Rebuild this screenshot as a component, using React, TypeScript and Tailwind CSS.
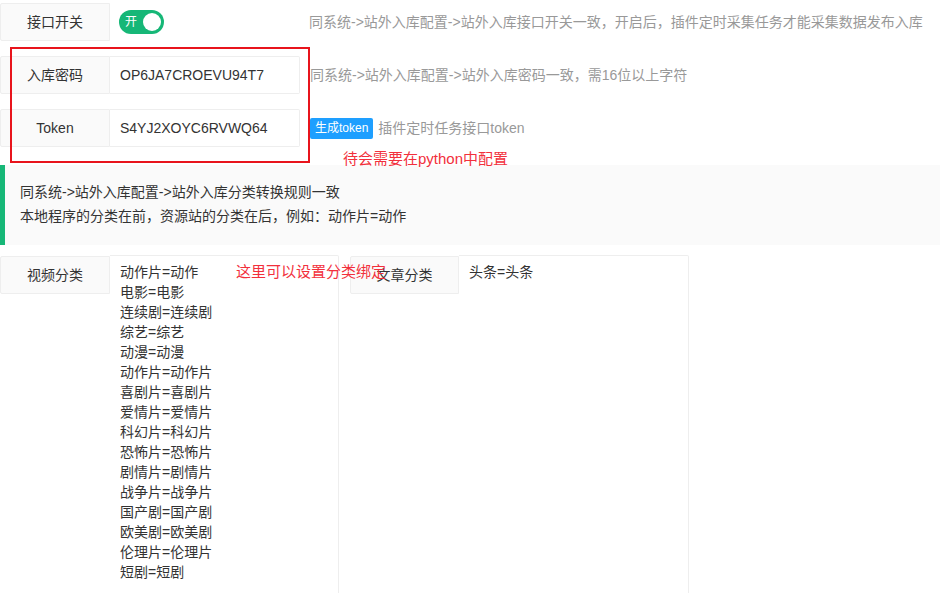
import React from "react";

const FONT = { fontFamily: '"Liberation Sans", "Noto Sans CJK SC", sans-serif' };

const VIDEO_RULES = [
  "动作片=动作",
  "电影=电影",
  "连续剧=连续剧",
  "综艺=综艺",
  "动漫=动漫",
  "动作片=动作片",
  "喜剧片=喜剧片",
  "爱情片=爱情片",
  "科幻片=科幻片",
  "恐怖片=恐怖片",
  "剧情片=剧情片",
  "战争片=战争片",
  "国产剧=国产剧",
  "欧美剧=欧美剧",
  "伦理片=伦理片",
  "短剧=短剧",
];

function Label({ children, w = "w-[110px]" }: { children: React.ReactNode; w?: string }) {
  return (
    <div
      className={`${w} h-[38px] shrink-0 flex items-center justify-center bg-[#fafafa] border border-[#eee] rounded-l-[2px] text-[14px] text-[#333]`}
    >
      {children}
    </div>
  );
}

function Field({ value }: { value: string }) {
  return (
    <div className="w-[190px] h-[38px] shrink-0 flex items-center pl-[10px] bg-white border border-l-0 border-[#eee] rounded-r-[2px] text-[14px] text-[#333]">
      {value}
    </div>
  );
}

function Aux({ children, className = "" }: { children: React.ReactNode; className?: string }) {
  return <span className={`text-[14px] text-[#999] whitespace-nowrap ${className}`}>{children}</span>;
}

export default function App() {
  return (
    <div className="relative w-[940px] h-[593px] overflow-hidden bg-white pt-[3px]" style={FONT}>
      {/* 接口开关 */}
      <div className="flex items-center h-[38px]">
        <Label>接口开关</Label>
        <div className="ml-[9px] w-[45px] h-[24px] rounded-full bg-[#16b777] flex items-center justify-between pl-[6px] pr-[3px]">
          <span className="text-[12px] text-white leading-none">开</span>
          <span className="w-[18px] h-[18px] rounded-full bg-white" />
        </div>
        <Aux className="ml-[145px]">同系统-&gt;站外入库配置-&gt;站外入库接口开关一致，开启后，插件定时采集任务才能采集数据发布入库</Aux>
      </div>

      {/* 入库密码 */}
      <div className="flex items-center h-[38px] mt-[15px]">
        <Label>入库密码</Label>
        <Field value="OP6JA7CROEVU94T7" />
        <Aux className="ml-[10px]">同系统-&gt;站外入库配置-&gt;站外入库密码一致，需16位以上字符</Aux>
      </div>

      {/* Token */}
      <div className="flex items-center h-[38px] mt-[15px]">
        <Label>Token</Label>
        <Field value="S4YJ2XOYC6RVWQ64" />
        <button
          type="button"
          className="ml-[10px] h-[21px] px-[5px] rounded-[2px] bg-[#1e9fff] text-white text-[12px] leading-[21px]"
        >
          生成token
        </button>
        <Aux className="ml-[5px]">插件定时任务接口token</Aux>
      </div>

      <div className="h-[18px] pl-[343px] text-[15px] leading-[24px] text-[#f2303c] whitespace-nowrap">
        待会需要在python中配置
      </div>

      {/* 说明 */}
      <div className="h-[80px] bg-[#fafafa] border-l-[5px] border-[#16b777] pl-[15px] pt-[15px] text-[14px] leading-[24px] text-[#333]">
        <p>同系统-&gt;站外入库配置-&gt;站外入库分类转换规则一致</p>
        <p>本地程序的分类在前，资源站的分类在后，例如：动作片=动作</p>
      </div>

      {/* 分类 */}
      <div className="flex items-start mt-[10px]">
        <div className="flex items-start">
          <div className="mt-[1px]">
            <Label>视频分类</Label>
          </div>
          <div className="w-[229px] h-[360px] border border-l-0 border-[#eee] rounded-r-[2px] px-[10px] pt-[6px] text-[14px] leading-[20px] text-[#333]">
            {VIDEO_RULES.map((r) => (
              <div key={r}>{r}</div>
            ))}
          </div>
        </div>
        <div className="flex items-start ml-[11px]">
          <div className="mt-[1px]">
            <Label w="w-[109px]">文章分类</Label>
          </div>
          <div className="w-[230px] h-[360px] border border-l-0 border-[#eee] rounded-r-[2px] px-[10px] pt-[6px] text-[14px] leading-[20px] text-[#333]">
            <div>头条=头条</div>
          </div>
        </div>
      </div>

      {/* annotations */}
      <div className="absolute left-[10px] top-[47px] w-[300px] h-[116px] border-2 border-[#e8141c] pointer-events-none" />
      <div className="absolute left-[236px] top-[262px] text-[15px] leading-[20px] text-[#f2303c] whitespace-nowrap">
        这里可以设置分类绑定
      </div>
    </div>
  );
}
